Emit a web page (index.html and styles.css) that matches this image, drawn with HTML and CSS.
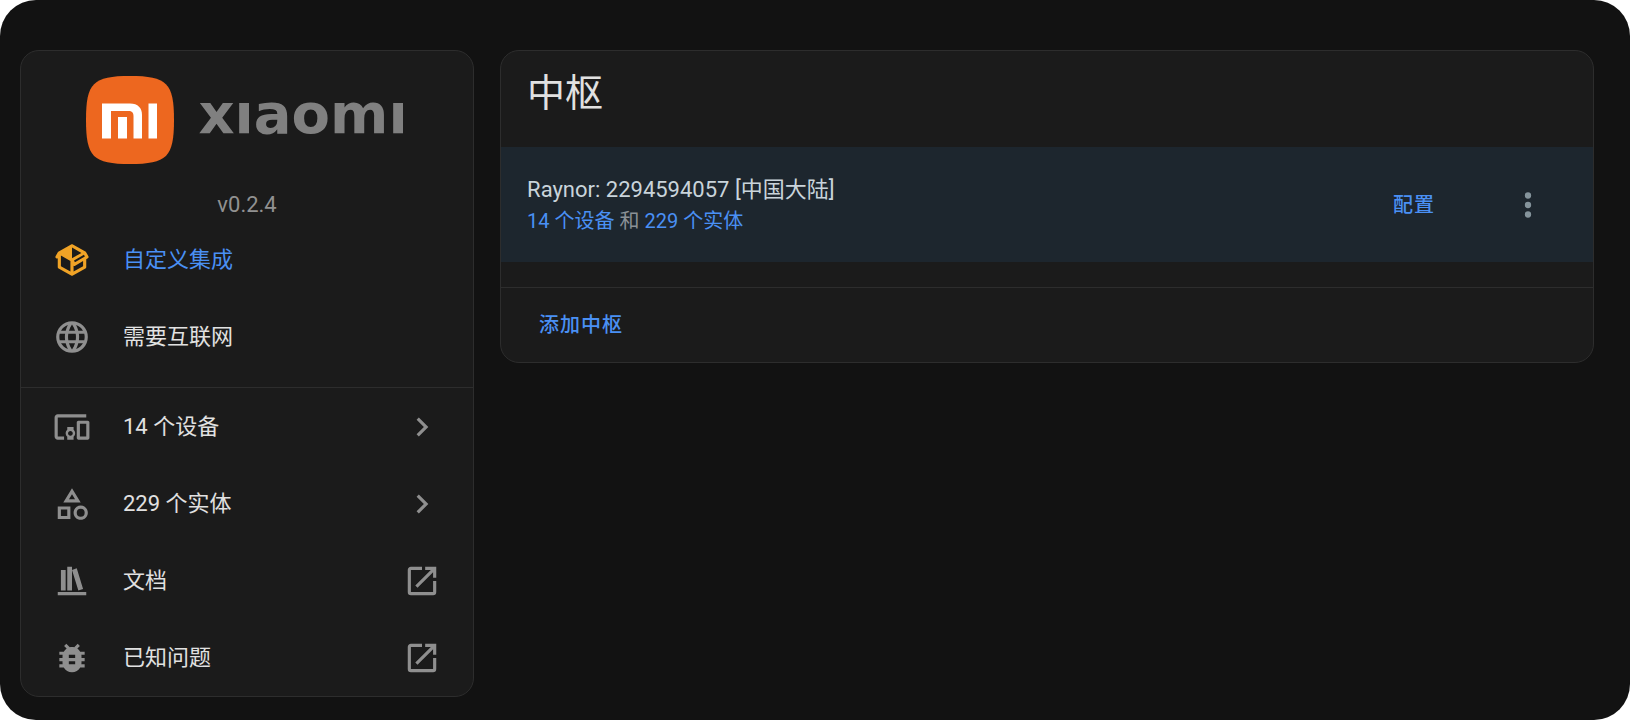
FILE: index.html
```
<!DOCTYPE html>
<html lang="zh-CN">
<head>
  <meta charset="UTF-8">
  <meta name="viewport" content="width=device-width, initial-scale=1">
  <title>Xiaomi</title>
  <link rel="stylesheet" href="styles.css">
</head>
<body>

  <main class="page">

    <!-- Integration info -->
    <aside class="card">
      <div class="brand">
        <svg class="brand-mark" viewBox="0 0 88 88" aria-hidden="true">
          <path fill="#ed671f" d="M0 44C0 7 7 0 44 0S88 7 88 44 81 88 44 88 0 81 0 44Z"/>
          <path fill="#fff" d="M16 27.5H44C52 27.5 56 32 56 39V62.5H47.5V40C47.5 36.5 46 35 42.5 35H25V62.5H16ZM32 41H41V62.5H32ZM62.5 27.5H71V62.5H62.5Z"/>
        </svg>
        <span class="brand-name">xıaomı</span>
      </div>
      <p class="version">v0.2.4</p>

      <ul class="list">
        <li>
          <a class="item custom" href="#custom">
            <svg class="icon" viewBox="0 0 24 24" aria-hidden="true"><path d="M2,10.96C1.5,10.68 1.35,10.07 1.63,9.59L3.13,7C3.24,6.8 3.41,6.66 3.6,6.58L11.43,2.18C11.59,2.06 11.79,2 12,2C12.21,2 12.41,2.06 12.57,2.18L20.47,6.62C20.66,6.72 20.82,6.88 20.91,7.08L22.36,9.6C22.64,10.08 22.47,10.69 22,10.96L21,11.54V16.5C21,16.88 20.79,17.21 20.47,17.38L12.57,21.82C12.41,21.94 12.21,22 12,22C11.79,22 11.59,21.94 11.43,21.82L3.53,17.38C3.21,17.21 3,16.88 3,16.5V10.96C2.7,11.13 2.32,11.14 2,10.96M12,4.15V4.15L12,10.85V10.85L17.96,7.5L12,4.15M5,15.91L11,19.29V12.58L5,9.21V15.91M19,15.91V12.69L14,15.59C13.67,15.77 13.3,15.76 13,15.6V19.29L19,15.91M13.85,13.36L20.13,9.73L19.55,8.72L13.27,12.35L13.85,13.36Z"/></svg>
            <span class="label">自定义集成</span>
          </a>
        </li>
        <li class="item">
          <svg class="icon" viewBox="0 0 24 24" aria-hidden="true"><path d="M16.36,14C16.44,13.34 16.5,12.68 16.5,12C16.5,11.32 16.44,10.66 16.36,10H19.74C19.9,10.64 20,11.31 20,12C20,12.69 19.9,13.36 19.74,14M14.59,19.56C15.19,18.45 15.65,17.25 15.97,16H18.92C17.96,17.65 16.43,18.93 14.59,19.56M14.34,14H9.66C9.56,13.34 9.5,12.68 9.5,12C9.5,11.32 9.56,10.65 9.66,10H14.34C14.43,10.65 14.5,11.32 14.5,12C14.5,12.68 14.43,13.34 14.34,14M12,19.96C11.17,18.76 10.5,17.43 10.09,16H13.91C13.5,17.43 12.83,18.76 12,19.96M8,8H5.08C6.03,6.34 7.57,5.06 9.4,4.44C8.8,5.55 8.35,6.75 8,8M5.08,16H8C8.35,17.25 8.8,18.45 9.4,19.56C7.57,18.93 6.03,17.65 5.08,16M4.26,14C4.1,13.36 4,12.69 4,12C4,11.31 4.1,10.64 4.26,10H7.64C7.56,10.66 7.5,11.32 7.5,12C7.5,12.68 7.56,13.34 7.64,14M12,4.03C12.83,5.23 13.5,6.57 13.91,8H10.09C10.5,6.57 11.17,5.23 12,4.03M18.92,8H15.97C15.65,6.75 15.19,5.55 14.59,4.44C16.43,5.07 17.96,6.34 18.92,8M12,2C6.47,2 2,6.5 2,12A10,10 0 0,0 12,22A10,10 0 0,0 22,12A10,10 0 0,0 12,2Z"/></svg>
          <span class="label">需要互联网</span>
        </li>
      </ul>

      <ul class="list links">
        <li>
          <a class="item" href="#devices">
            <svg class="icon" viewBox="0 0 24 24" aria-hidden="true"><path d="M3 6H21V4H3C1.9 4 1 4.9 1 6V18C1 19.1 1.9 20 3 20H7V18H3V6M13 12H9V13.78C8.39 14.33 8 15.11 8 16C8 16.89 8.39 17.67 9 18.22V20H13V18.22C13.61 17.67 14 16.88 14 16S13.61 14.33 13 13.78V12M11 17.5C10.17 17.5 9.5 16.83 9.5 16S10.17 14.5 11 14.5 12.5 15.17 12.5 16 11.83 17.5 11 17.5M22 8H16C15.5 8 15 8.5 15 9V19C15 19.5 15.5 20 16 20H22C22.5 20 23 19.5 23 19V9C23 8.5 22.5 8 22 8M21 18H17V10H21V18Z"/></svg>
            <span class="label">14 个设备</span>
            <svg class="icon" viewBox="0 0 24 24" aria-hidden="true"><path d="M8.59,16.58L13.17,12L8.59,7.41L10,6L16,12L10,18L8.59,16.58Z"/></svg>
          </a>
        </li>
        <li>
          <a class="item" href="#entities">
            <svg class="icon" viewBox="0 0 24 24" aria-hidden="true"><path d="M11,13.5V21.5H3V13.5H11M9,15.5H5V19.5H9V15.5M12,2L17.5,11H6.5L12,2M12,5.86L10.08,9H13.92L12,5.86M17.5,13C20,13 22,15 22,17.5C22,20 20,22 17.5,22C15,22 13,20 13,17.5C13,15 15,13 17.5,13M17.5,15A2.5,2.5 0 0,0 15,17.5A2.5,2.5 0 0,0 17.5,20A2.5,2.5 0 0,0 20,17.5A2.5,2.5 0 0,0 17.5,15Z"/></svg>
            <span class="label">229 个实体</span>
            <svg class="icon" viewBox="0 0 24 24" aria-hidden="true"><path d="M8.59,16.58L13.17,12L8.59,7.41L10,6L16,12L10,18L8.59,16.58Z"/></svg>
          </a>
        </li>
        <li>
          <a class="item" href="#docs">
            <svg class="icon" viewBox="0 0 24 24" aria-hidden="true"><path d="M9 3V18H12V3H9M12 5L16 18L19 17L15 4L12 5M5 5V18H8V5H5M3 19V21H21V19H3Z"/></svg>
            <span class="label">文档</span>
            <svg class="icon" viewBox="0 0 24 24" aria-hidden="true"><path d="M14,3V5H17.59L7.76,14.83L9.17,16.24L19,6.41V10H21V3M19,19H5V5H12V3H5C3.89,3 3,3.9 3,5V19A2,2 0 0,0 5,21H19A2,2 0 0,0 21,19V12H19V19Z"/></svg>
          </a>
        </li>
        <li>
          <a class="item" href="#issues">
            <svg class="icon" viewBox="0 0 24 24" aria-hidden="true"><path d="M14,12H10V10H14M14,16H10V14H14M20,8H17.19C16.74,7.22 16.12,6.55 15.37,6.04L17,4.41L15.59,3L13.42,5.17C12.96,5.06 12.49,5 12,5C11.51,5 11.04,5.06 10.59,5.17L8.41,3L7,4.41L8.62,6.04C7.88,6.55 7.26,7.22 6.81,8H4V10H6.09C6.04,10.33 6,10.66 6,11V12H4V14H6V15C6,15.34 6.04,15.67 6.09,16H4V18H6.81C7.85,19.79 9.78,21 12,21C14.22,21 16.15,19.79 17.19,18H20V16H17.91C17.96,15.67 18,15.34 18,15V14H20V12H18V11C18,10.66 17.96,10.33 17.91,10H20V8Z"/></svg>
            <span class="label">已知问题</span>
            <svg class="icon" viewBox="0 0 24 24" aria-hidden="true"><path d="M14,3V5H17.59L7.76,14.83L9.17,16.24L19,6.41V10H21V3M19,19H5V5H12V3H5C3.89,3 3,3.9 3,5V19A2,2 0 0,0 5,21H19A2,2 0 0,0 21,19V12H19V19Z"/></svg>
          </a>
        </li>
      </ul>
    </aside>

    <!-- Hubs -->
    <section class="card">
      <h1 class="title">中枢</h1>
      <div class="entry">
        <div class="entry-text">
          <div class="entry-name">Raynor: 2294594057 [中国大陆]</div>
          <div class="entry-info"><a href="#devices">14 个设备</a> 和 <a href="#entities">229 个实体</a></div>
        </div>
        <button class="button" type="button">配置</button>
        <button class="menu-button" type="button" aria-label="菜单">
          <svg class="icon" viewBox="0 0 24 24" aria-hidden="true"><path d="M12,16A2,2 0 0,1 14,18A2,2 0 0,1 12,20A2,2 0 0,1 10,18A2,2 0 0,1 12,16M12,10A2,2 0 0,1 14,12A2,2 0 0,1 12,14A2,2 0 0,1 10,12A2,2 0 0,1 12,10M12,4A2,2 0 0,1 14,6A2,2 0 0,1 12,8A2,2 0 0,1 10,6A2,2 0 0,1 12,4Z"/></svg>
        </button>
      </div>
      <div class="actions">
        <button class="button" type="button">添加中枢</button>
      </div>
    </section>

  </main>

</body>
</html>
```
FILE: styles.css
```
* {
  box-sizing: border-box;
}

body {
  margin: 0;
  background: #fff;
  font-family: Roboto, "Noto Sans CJK SC", sans-serif;
  font-size: 22px;
  color: #e1e1e1;
}

a {
  color: #4a90f4;
  text-decoration: none;
}

.page {
  display: grid;
  grid-template-columns: 22fr 53fr;
  gap: 26px;
  align-items: start;
  min-height: 100vh;
  padding: 50px 36px 22px 20px;
  background: #121212;
  border-radius: 36px;
}

.card {
  background: #1b1b1b;
  border: 1px solid #2d2d2d;
  border-radius: 19px;
  overflow: hidden;
}

.brand {
  display: flex;
  justify-content: center;
  align-items: center;
  gap: 24px;
  margin: 25px 0;
}

.brand-mark {
  width: 88px;
  height: 88px;
}

.brand-name {
  font-family: "DejaVu Sans", sans-serif;
  font-size: 56px;
  font-weight: 700;
  line-height: 76px;
  padding-bottom: 12px;
  color: #808080;
}

.version {
  margin: 0;
  line-height: 32px;
  text-align: center;
  color: #919191;
}

.list {
  margin: 0;
  padding: 0;
  list-style: none;
}

.links {
  margin-top: 12px;
  border-top: 1px solid #2d2d2d;
}

.item {
  display: flex;
  align-items: center;
  gap: 32px;
  height: 77px;
  padding: 0 32px;
  color: #e1e1e1;
}

.item.custom {
  color: #4a90f4;
}

.item.custom .icon {
  fill: #f0a326;
}

.label {
  flex: 1;
  line-height: 33px;
}

.icon {
  display: block;
  flex: none;
  width: 38px;
  height: 38px;
  fill: #8f8f8f;
}

.title {
  margin: 0;
  padding: 12px 26px 24px;
  font-size: 38px;
  font-weight: 400;
  line-height: 60px;
}

.entry {
  display: flex;
  align-items: center;
  height: 115px;
  padding: 0 26px;
  background: #1d262e;
}

.entry-text {
  flex: 1;
}

.entry-name {
  line-height: 33px;
  color: #c9d4db;
}

.entry-info {
  font-size: 20px;
  line-height: 31px;
  color: #8a9196;
}

.button {
  height: 48px;
  padding: 0 25px;
  border: none;
  border-radius: 6px;
  background: none;
  font-family: inherit;
  font-size: 20px;
  font-weight: 500;
  line-height: 24px;
  letter-spacing: 1px;
  color: #4a90f4;
  cursor: pointer;
}

.entry .button {
  margin-right: 30px;
}

.menu-button {
  display: flex;
  justify-content: center;
  align-items: center;
  width: 77px;
  height: 77px;
  padding: 0;
  border: none;
  border-radius: 50%;
  background: none;
  cursor: pointer;
}

.menu-button .icon {
  fill: #84939b;
}

.actions {
  margin-top: 25px;
  padding: 13px;
  border-top: 1px solid #2d2d2d;
}
```
